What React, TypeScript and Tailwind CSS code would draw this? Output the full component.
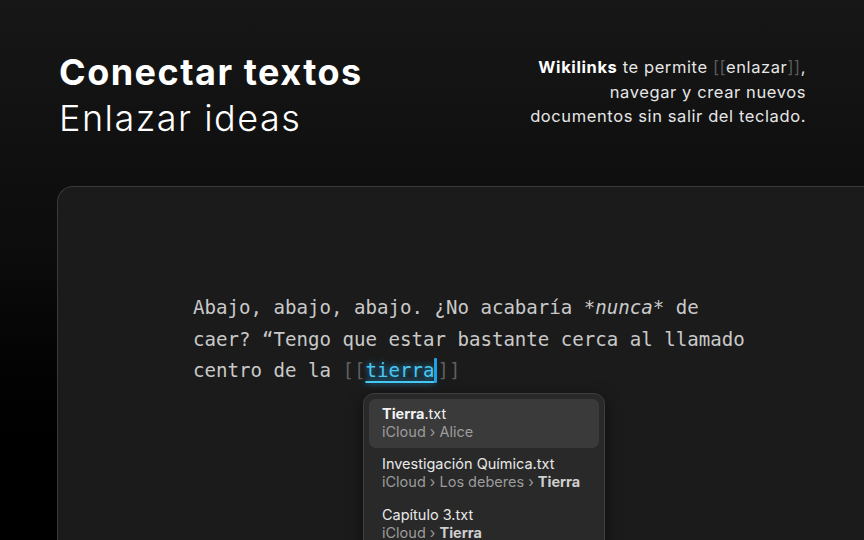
import React from "react";

export default function App() {
  return (
    <div
      className="relative w-[864px] h-[540px] overflow-hidden bg-gradient-to-b from-[#171717] via-[#0b0b0b] to-black"
      style={{ fontFamily: "Inter, 'Noto Sans', sans-serif" }}
    >
      <div className="flex justify-between pl-[59px] pr-[58px] pt-[49px]">
        <div className="text-white text-[36px] leading-[46px] tracking-[1.5px]">
          <div className="font-bold">Conectar textos</div>
          <div className="font-light">Enlazar ideas</div>
        </div>
        <div className="text-right text-[16.5px] leading-[24.5px] tracking-[0.6px] text-[#e6e6e6] pt-[6px]">
          <div>
            <span className="font-bold text-white">Wikilinks</span> te permite{" "}
            <span className="text-[#5a5a5a]">[[</span>enlazar
            <span className="text-[#5a5a5a]">]]</span>,
          </div>
          <div>navegar y crear nuevos</div>
          <div>documentos sin salir del teclado.</div>
        </div>
      </div>

      <div className="ml-[57px] mt-[45px] h-[400px] rounded-tl-[16px] border-l border-t border-[#3a3a3a] bg-[#1b1b1b] pt-[105px] pl-[135px]">
        <div
          className="leading-[31.5px] text-[#c9c9c9]"
          style={{ fontFamily: "'DejaVu Sans Mono', 'Liberation Mono', monospace", fontSize: "19.1px" }}
        >
          <div>
            Abajo, abajo, abajo. ¿No acabaría <span className="italic">*nunca*</span> de
          </div>
          <div>caer? “Tengo que estar bastante cerca al llamado</div>
          <div className="flex items-center">
            <span className="whitespace-pre">centro de la </span>
            <span className="text-[#5e5e5e]">[[</span>
            <span className="text-[#47c8f2] underline underline-offset-[4px] decoration-[1.5px] [text-shadow:0_0_6px_rgba(40,170,240,0.9)]">
              tierra
            </span>
            <span className="inline-block w-[3px] h-[25px] bg-[#1e9fe6] rounded-[1px]" />
            <span className="text-[#5e5e5e]">]]</span>
          </div>
        </div>

        <div className="ml-[170px] mt-[6px] w-[242px] rounded-[11px] border border-[#3e3e3e] bg-[#292929] p-[5px] text-[14.5px] leading-[18px] shadow-[0_4px_16px_rgba(0,0,0,0.5)]">
          <div className="rounded-[7px] bg-[#3a3a3a] px-[13px] py-[6px] h-[49px]">
            <div className="text-[#f2f2f2]">
              <span className="font-bold">Tierra</span>.txt
            </div>
            <div className="text-[#9c9c9c]">iCloud › Alice</div>
          </div>
          <div className="px-[13px] pt-[7px] h-[51px]">
            <div className="text-[#e8e8e8]">Investigación Química.txt</div>
            <div className="text-[#9c9c9c]">
              iCloud › Los deberes › <span className="font-bold text-[#cfcfcf]">Tierra</span>
            </div>
          </div>
          <div className="px-[13px] pt-[7px] h-[51px]">
            <div className="text-[#e8e8e8]">Capítulo 3.txt</div>
            <div className="text-[#9c9c9c]">
              iCloud › <span className="font-bold text-[#cfcfcf]">Tierra</span>
            </div>
          </div>
        </div>
      </div>
    </div>
  );
}
